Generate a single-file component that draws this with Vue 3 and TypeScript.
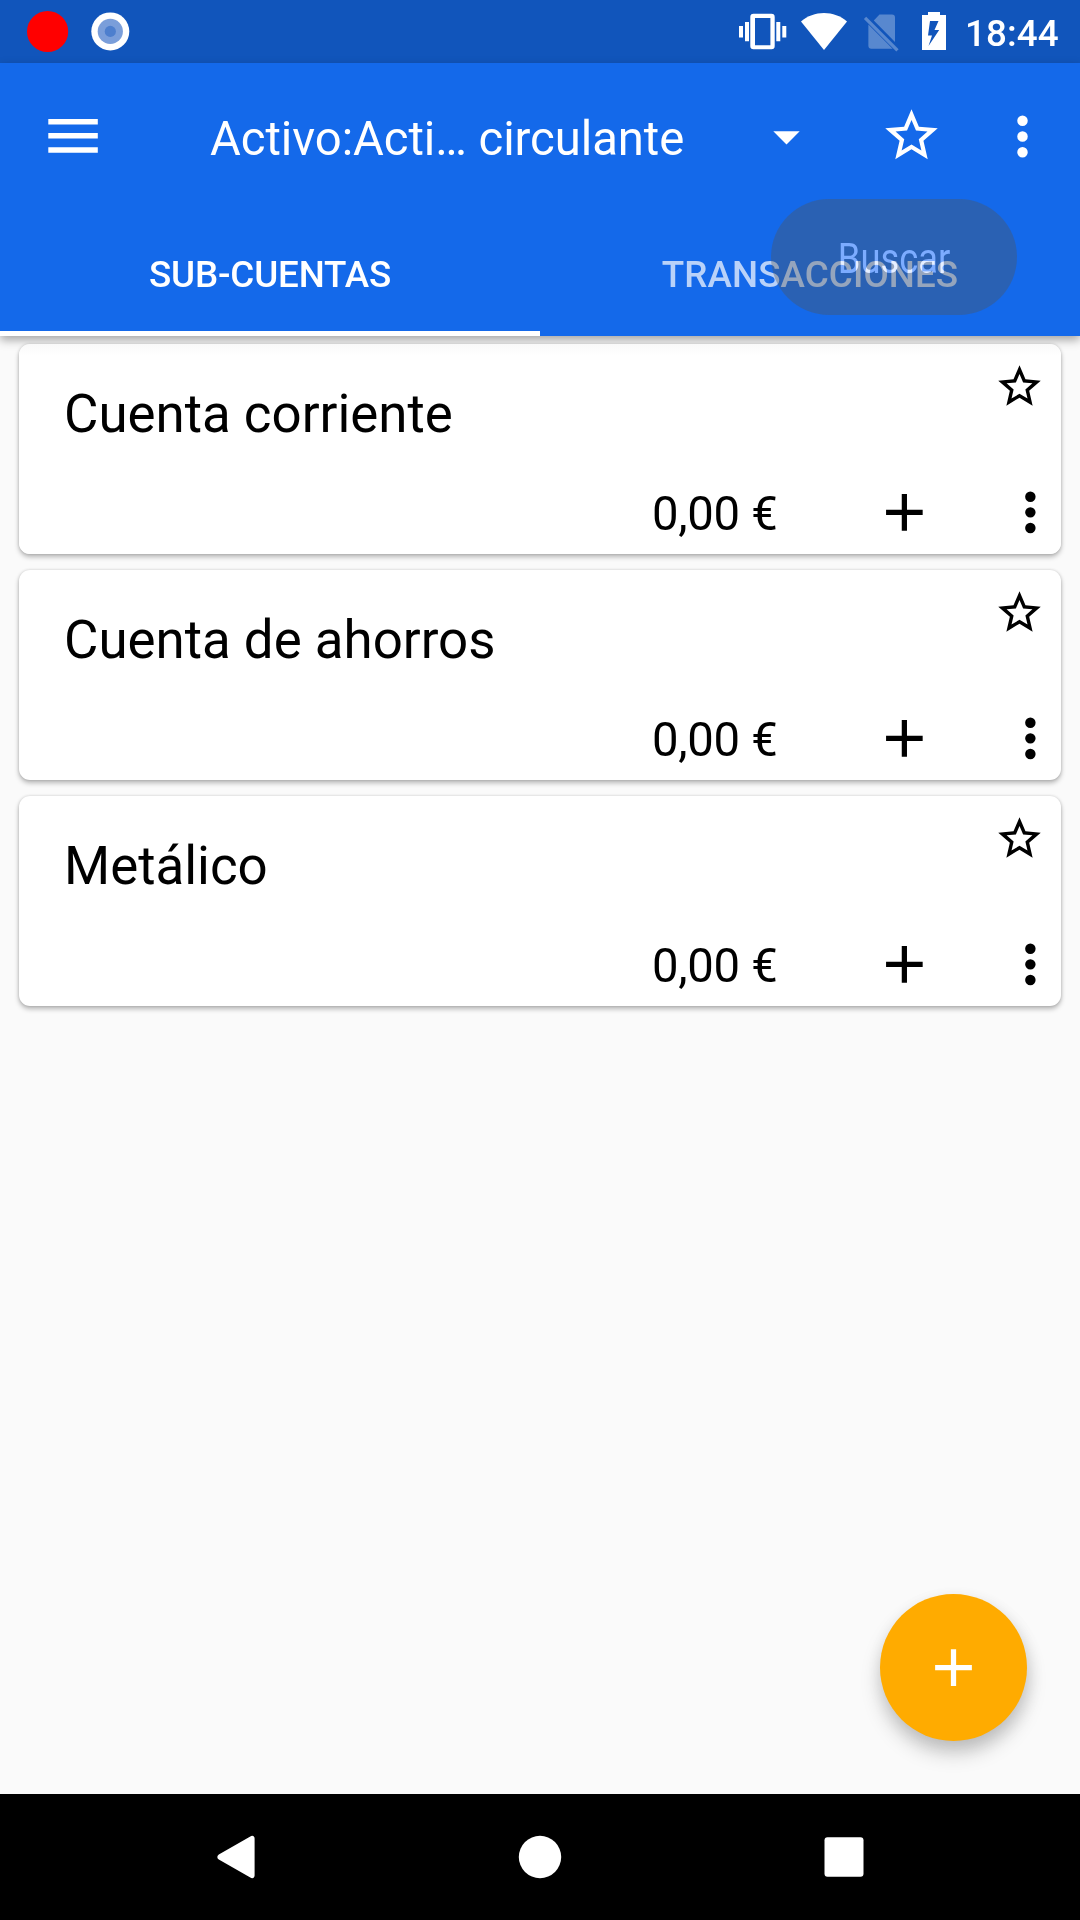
<script setup lang="ts">
interface Account {
  name: string
  balance: string
}

const accounts: Account[] = [
  { name: 'Cuenta corriente', balance: '0,00 €' },
  { name: 'Cuenta de ahorros', balance: '0,00 €' },
  { name: 'Metálico', balance: '0,00 €' },
]

const starPath =
  'M22 9.24l-7.19-.62L12 2 9.19 8.63 2 9.24l5.46 4.73L5.82 21 12 17.27 18.18 21l-1.63-7.03L22 9.24zM12 15.4l-3.76 2.27 1-4.28-3.32-2.88 4.38-.38L12 6.1l1.71 4.04 4.38.38-3.32 2.88 1 4.28L12 15.4z'
const morePath =
  'M12 8a2 2 0 1 0 0-4 2 2 0 0 0 0 4zm0 2a2 2 0 1 0 0 4 2 2 0 0 0 0-4zm0 6a2 2 0 1 0 0 4 2 2 0 0 0 0-4z'
const addPath = 'M19 13h-6v6h-2v-6H5v-2h6V5h2v6h6v2z'
</script>

<template>
  <div class="screen">
    <div class="status">
      <svg class="notices" width="140" height="63" viewBox="0 0 140 63">
        <circle cx="47.6" cy="31.5" r="20.6" fill="#f00" />
        <circle cx="110.3" cy="31.4" r="19" fill="#fff" />
        <circle cx="110.3" cy="31.4" r="12.6" fill="#7a9eda" />
        <circle cx="110.3" cy="31.4" r="5.6" fill="#4d7fce" />
      </svg>
      <svg class="system" width="216" height="63" viewBox="735 0 216 63" fill="#fff">
        <path fill-rule="evenodd" d="M753.5 13.8h18a3.2 3.2 0 0 1 3.2 3.2v29a3.2 3.2 0 0 1-3.2 3.2h-18a3.2 3.2 0 0 1-3.2-3.2V17a3.2 3.2 0 0 1 3.2-3.2zM755 18v27.3h15.4V18z" />
        <path d="M745 22h4v19.3h-4zM739 26h4v11.6h-4zM776.3 22h4v19.3h-4zM782.3 26h4v11.6h-4z" />
        <path d="M801 21.4C807.500 16 815.500 13 824 13s16.500 3 23 8.400L824 50z" />
        <g fill-opacity=".3">
          <path d="M879.500 14.600h12.500a3 3 0 0 1 3 3v24.500L873.800 20.500z" />
          <path d="M868.400 24.600l24.200 24.200H871.400a3 3 0 0 1-3-3z" />
          <path d="M866.200 16.800L898.600 49.200l-2.300 2.300L863.900 19.100z" />
        </g>
        <path fill-rule="evenodd" d="M922 15h6v-3h12v3h6v35h-24zM930 21l-2 14.500h4L928.500 46 939.200 30h-4.700l4-9z" />
      </svg>
      <span class="clock">18:44</span>
    </div>

    <header class="header">
      <div class="toolbar">
        <svg class="menu" width="50" height="36" viewBox="0 0 50 36" fill="#fff">
          <path d="M.3 1h49.500v5.500H.300zM.3 15.100h49.500v5.500H.300zM.3 29.200h49.500v5.500H.300z" />
        </svg>
        <span class="title">Activo:Acti… circulante</span>
        <svg class="caret" width="27" height="14" viewBox="0 0 27 14" fill="#fff">
          <path d="M.3 .2h26.400L13.500 13.400z" />
        </svg>
        <svg class="favorite" width="63" height="63" viewBox="0 0 24 24" fill="#fff"><path :d="starPath" /></svg>
        <svg class="overflow" width="63" height="63" viewBox="0 0 24 24" fill="#fff"><path :d="morePath" /></svg>
      </div>
      <nav class="tabs">
        <div class="tab active"><span>SUB-CUENTAS</span></div>
        <div class="tab"><span>TRANSACCIONES</span></div>
      </nav>
      <div class="toast"><span class="toast-text">Buscar</span></div>
    </header>

    <main class="content">
      <article v-for="account in accounts" :key="account.name" class="card">
        <div class="card-top">
          <span class="name">{{ account.name }}</span>
          <svg class="star" width="51" height="51" viewBox="0 0 24 24"><path :d="starPath" /></svg>
        </div>
        <div class="card-bottom">
          <span class="balance">{{ account.balance }}</span>
          <svg class="add" width="63" height="63" viewBox="0 0 24.1 24.1"><path :d="addPath" /></svg>
          <svg class="more" width="63" height="63" viewBox="0 0 24.1 24.1"><path :d="morePath" /></svg>
        </div>
      </article>
      <button class="fab" type="button" aria-label="+">
        <svg width="63" height="63" viewBox="0 0 24 24" fill="#fff"><path :d="addPath" /></svg>
      </button>
    </main>

    <footer class="navbar">
      <svg width="1080" height="126" viewBox="0 0 1080 126" fill="#fff">
        <path d="M250.300 42.400c2-1.600 4.300-.4 4.300 2v37.200c0 2.400-2.300 3.600-4.300 2l-31.500-18c-2-1.400-2-3.800 0-5.200z" />
        <circle cx="540" cy="63" r="21.200" />
        <rect x="824.500" y="43.200" width="39" height="39.600" rx="3" />
      </svg>
    </footer>
  </div>
</template>

<style>
body {
  margin: 0;
}
</style>

<style scoped>
.screen {
  width: 1080px;
  height: 1920px;
  display: flex;
  flex-direction: column;
  overflow: hidden;
  background: #fafafa;
  font-family: Roboto, sans-serif;
  color: #000;
}
svg {
  display: block;
  flex: none;
}
.status {
  height: 63px;
  flex: none;
  display: flex;
  background: #1155bb;
  color: #fff;
}
.system {
  margin-left: 595px;
}
.clock {
  margin-left: 14px;
  padding-top: 2px;
  font-size: 36.75px;
  font-weight: 500;
  line-height: 63px;
  letter-spacing: 0.1px;
}
.header {
  height: 273px;
  flex: none;
  position: relative;
  background: #1469ea;
  color: #fff;
  box-shadow: 0 4px 9px rgba(0, 0, 0, 0.34);
}
.toolbar {
  height: 147px;
  display: flex;
  align-items: center;
}
.menu {
  margin-left: 48px;
  margin-bottom: 2px;
}
.title {
  width: 476px;
  margin-left: 112px;
  padding-top: 5px;
  font-size: 47.25px;
  line-height: 56px;
  letter-spacing: -0.06px;
  white-space: nowrap;
}
.caret {
  margin-left: 87px;
  margin-top: 2px;
}
.favorite {
  margin-left: 80px;
  margin-bottom: 2px;
}
.overflow {
  margin-left: 48px;
  margin-bottom: 1px;
}
.tabs {
  height: 126px;
  display: flex;
}
.tab {
  flex: 1;
  box-sizing: border-box;
  border-bottom: 5px solid transparent;
  padding-top: 3px;
  text-align: center;
  font-size: 36.75px;
  font-weight: 500;
  line-height: 123px;
  letter-spacing: 0.1px;
  color: rgba(255, 255, 255, 0.7);
}
.tab.active {
  color: #fff;
  letter-spacing: -0.15px;
  border-bottom-color: #fff;
}
.toast {
  position: absolute;
  left: 771px;
  top: 136px;
  width: 246px;
  height: 116px;
  border-radius: 58px;
  background: rgba(83, 84, 82, 0.355);
  display: flex;
  align-items: center;
  justify-content: center;
}
.toast-text {
  font-size: 42px;
  line-height: 50px;
  padding-top: 3px;
  color: rgb(82, 75, 78);
  mix-blend-mode: plus-lighter;
  transform: scaleX(0.865);
}
.content {
  flex: 1;
  position: relative;
  padding: 8px 19px;
  display: flex;
  flex-direction: column;
  gap: 16px;
}
.card {
  height: 210px;
  border-radius: 11px;
  background: #fff;
  box-shadow: 0 3px 5px rgba(0, 0, 0, 0.27), 0 0 3px rgba(0, 0, 0, 0.16);
  display: flex;
  flex-direction: column;
}
.card:first-child {
  background: linear-gradient(#f9f9f9, #fff 11px);
}
.card-top {
  height: 136.5px;
  display: flex;
  justify-content: space-between;
}
.name {
  padding: 39px 0 0 45px;
  font-size: 52.85px;
  line-height: 62px;
}
.star {
  margin: 16.5px 16.5px 0 0;
}
.card-bottom {
  height: 63px;
  display: flex;
  align-items: center;
  justify-content: flex-end;
}
.balance {
  padding-top: 4px;
  margin-right: 95px;
  font-size: 47.25px;
  line-height: 56px;
  letter-spacing: -0.3px;
}
.add {
  margin-right: 63px;
}
.more {
  margin-right: -0.5px;
}
.fab {
  position: absolute;
  right: 53px;
  bottom: 53px;
  width: 147px;
  height: 147px;
  padding: 0;
  border: 0;
  border-radius: 50%;
  background: #ffab00;
  display: flex;
  align-items: center;
  justify-content: center;
  box-shadow: 0 13px 20px rgba(0, 0, 0, 0.18), 2px 6px 16px rgba(0, 0, 0, 0.1);
}
.navbar {
  height: 126px;
  flex: none;
  background: #000;
}
</style>
